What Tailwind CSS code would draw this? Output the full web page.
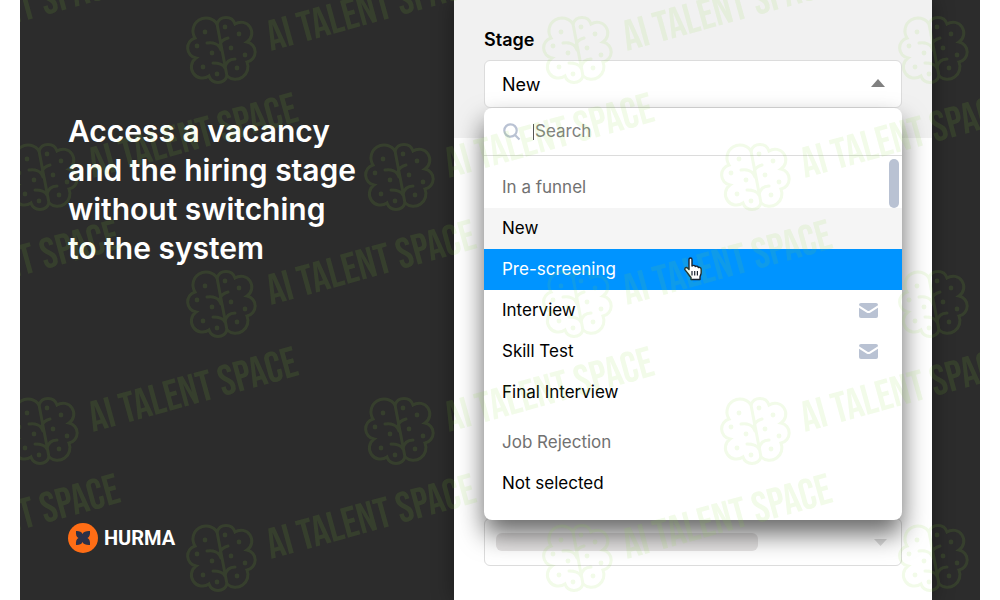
<!DOCTYPE html>
<html lang="en">
<head>
    <meta charset="UTF-8">
    <meta name="viewport" content="width=device-width, initial-scale=1.0">
    <title>Hurma - hiring stage</title>
    <script src="https://cdn.jsdelivr.net/npm/@tailwindcss/browser@4"></script>
</head>
<body class="bg-white font-['Inter','Liberation_Sans',sans-serif]">
    <main class="relative mx-5 grid min-h-screen grid-cols-[434fr_478fr_48fr] overflow-hidden bg-[#2c2c2c]">

        <!-- left: headline + logo -->
        <section class="flex flex-col justify-between pt-28 pb-[47px] pl-12">
            <h1 class="text-[30px] leading-[39px] font-semibold whitespace-nowrap text-white">Access a vacancy<br>and the hiring stage<br>without switching<br>to the system</h1>
            <a href="#" class="flex items-center gap-[6px]">
                <svg class="size-[30px]" viewBox="0 0 30 30">
                    <circle cx="15" cy="15" r="15" fill="#ff6d15"/>
                    <path d="M8 8C11 7.800 13.500 8.500 14.500 11C15.500 8.500 18.500 7.800 22 8C22.300 11.500 21.500 14 19.500 15C21.500 16 22.300 18.500 22 22C18.500 22.200 15.500 21.500 14.500 19C13.500 21.500 11 22.200 8 22C7.800 18.500 8.200 16 10.500 15C8.200 14 7.800 11.500 8 8Z" fill="#2d3047"/>
                </svg>
                <span class="font-['Roboto',sans-serif] text-[20px] leading-[30px] font-bold text-white">HURMA</span>
            </a>
        </section>

        <!-- middle: form panel -->
        <section class="bg-white shadow-[0_0_20px_rgba(0,0,0,0.4)]">
            <div class="h-[138px] bg-[#f1f1f1] px-[30px] pt-7">
                <label for="stage" class="block text-[18px] leading-6 font-semibold text-black">Stage</label>
                <div class="relative mt-2">
                    <select id="stage" class="block h-12 w-full appearance-none rounded-md border border-[#dcdcdc] bg-white px-[17px] text-[18px] text-black">
                        <option>New</option>
                    </select>
                    <svg class="pointer-events-none absolute top-[19px] right-[17px] h-2 w-[14px]" viewBox="0 0 14 8"><path d="M7 0L14 8H0Z" fill="#808080"/></svg>

                    <!-- opened list -->
                    <div class="absolute inset-x-0 top-12 z-10 rounded-lg bg-white pb-4 shadow-[0_14px_26px_rgba(0,0,0,0.6)]">
                        <div class="flex h-12 items-center border-b border-[#dcdcdc] pl-[19px]">
                            <svg class="size-[18px]" viewBox="0 0 18 18" fill="none" stroke="#b9c2d3" stroke-width="2.200">
                                <circle cx="7.500" cy="7.500" r="6.200"/>
                                <path d="M12 12L16.500 16.500"/>
                            </svg>
                            <span class="ml-3 h-4 w-px bg-[#555]"></span>
                            <input type="text" aria-label="Search" placeholder="Search" class="ml-px w-40 text-[17px] placeholder:text-[#808080] focus:outline-none">
                        </div>
                        <div class="absolute top-[51px] right-[3px] h-[49px] w-[10px] rounded-full bg-[#b9c2d3]"></div>
                        <div class="flex flex-col pt-[11px] text-[17px] leading-[41px] text-black">
                            <p class="px-[18px] text-[#717171]">In a funnel</p>
                            <button class="bg-[#f5f5f5] px-[18px] text-left">New</button>
                            <button class="relative bg-[#0094ff] px-[18px] text-left text-white">Pre-screening
                                <svg class="absolute top-2 left-[199px] h-6 w-5" viewBox="0 0 20 24">
                                    <path d="M6 2.500C6 .500 9 .500 9 2.500V9C10 8 12 8.300 12.300 9.500C13.300 8.800 15 9.200 15.400 10.500C16.600 10 18.200 10.700 18.200 12.500V15.500C18.200 18 17 18.500 17 20V22.500H8V20.500C6 18.500 4.500 15.500 2.500 13.500C.500 11.500 3 9.500 4.500 11L6 12.500Z" fill="#fff" stroke="#1b2430" stroke-width="1.400" stroke-linejoin="round"/>
                                    <path d="M9 14V18.500M11.700 14V18.500M14.400 14V18.500" stroke="#1b2430" stroke-width="1.200"/>
                                </svg>
                            </button>
                            <button class="flex items-center justify-between pr-6 pl-[18px]">Interview
                                <svg class="h-[15px] w-[19px]" viewBox="0 0 19 15">
                                    <rect width="19" height="15" rx="2" fill="#b9c2d3"/>
                                    <path d="M-1 2.800L8 8.600Q9.500 9.600 11 8.600L20 2.800" fill="none" stroke="#fff" stroke-width="2"/>
                                </svg>
                            </button>
                            <button class="flex items-center justify-between pr-6 pl-[18px]">Skill Test
                                <svg class="h-[15px] w-[19px]" viewBox="0 0 19 15">
                                    <rect width="19" height="15" rx="2" fill="#b9c2d3"/>
                                    <path d="M-1 2.800L8 8.600Q9.500 9.600 11 8.600L20 2.800" fill="none" stroke="#fff" stroke-width="2"/>
                                </svg>
                            </button>
                            <button class="px-[18px] text-left">Final Interview</button>
                            <p class="mt-[9px] px-[18px] text-[#717171]">Job Rejection</p>
                            <button class="px-[18px] text-left">Not selected</button>
                        </div>
                    </div>
                </div>
            </div>

            <!-- next field, partly under the list -->
            <div class="px-[30px] pt-[380px]">
                <div class="flex h-12 items-center justify-between rounded-md border border-[#dcdcdc] pr-[14px] pl-[11px]">
                    <span class="h-[18px] w-[67%] rounded-md bg-[#e6e4e4]"></span>
                    <svg class="h-[7px] w-[13px]" viewBox="0 0 13 7"><path d="M0 0H13L6.500 7Z" fill="#dcdcdc"/></svg>
                </div>
            </div>
        </section>

        <!-- watermark -->
        <svg class="pointer-events-none absolute top-0 left-0 z-20 h-[600px] w-[960px]" viewBox="20 0 960 600" aria-hidden="true">
            <defs>
                <g id="mark">
                    <g fill="none" stroke="#8ad838" stroke-width="3" stroke-linecap="round">
                        <path d="M-4 -26A9.500 9.500 0 0 1 14 -26A10.500 10.500 0 0 1 26 -8A10.200 10.200 0 0 1 26 12A12.500 12.500 0 0 1 6 26A9.500 9.500 0 0 1 -12 26A10.500 10.500 0 0 1 -25 8A10.300 10.300 0 0 1 -26 -12A12.700 12.700 0 0 1 -4 -26Z"/>
                        <path d="M-4 -26L6 26M0 0C-2 -6 -8 -8 -14 -7M-1 -5C0 -9 3 -11 7 -12M4 18C2 14 -3 13 -8 13M4 18C5 12 9 9 14 9"/>
                    </g>
                    <g fill="#8ad838">
                        <circle cx="-16" cy="-18" r="2.400"/><circle cx="-24" cy="-4" r="2.400"/><circle cx="-9" cy="3" r="2.400"/><circle cx="-18" cy="17" r="2.400"/><circle cx="-4" cy="24" r="2.400"/>
                        <circle cx="4" cy="-23" r="2.400"/><circle cx="18" cy="-16" r="2.400"/><circle cx="10" cy="-2" r="2.400"/><circle cx="24" cy="5" r="2.400"/><circle cx="16" cy="18" r="2.400"/>
                        <text transform="translate(50 1) rotate(-15.400)" class="font-['Bebas_Neue','Roboto_Condensed','Liberation_Sans_Narrow','Liberation_Sans',sans-serif] text-[43px]">AI TALENT SPACE</text>
                    </g>
                </g>
            </defs>
            <g opacity="0.110">
                <use href="#mark" x="-135" y="50"/><use href="#mark" x="221" y="50"/><use href="#mark" x="577" y="50"/><use href="#mark" x="933" y="50"/>
                <use href="#mark" x="43" y="177"/><use href="#mark" x="399" y="177"/><use href="#mark" x="755" y="177"/>
                <use href="#mark" x="-135" y="304"/><use href="#mark" x="221" y="304"/><use href="#mark" x="577" y="304"/><use href="#mark" x="933" y="304"/>
                <use href="#mark" x="43" y="431"/><use href="#mark" x="399" y="431"/><use href="#mark" x="755" y="431"/>
                <use href="#mark" x="-135" y="558"/><use href="#mark" x="221" y="558"/><use href="#mark" x="577" y="558"/><use href="#mark" x="933" y="558"/>
            </g>
        </svg>
    </main>
</body>
</html>
